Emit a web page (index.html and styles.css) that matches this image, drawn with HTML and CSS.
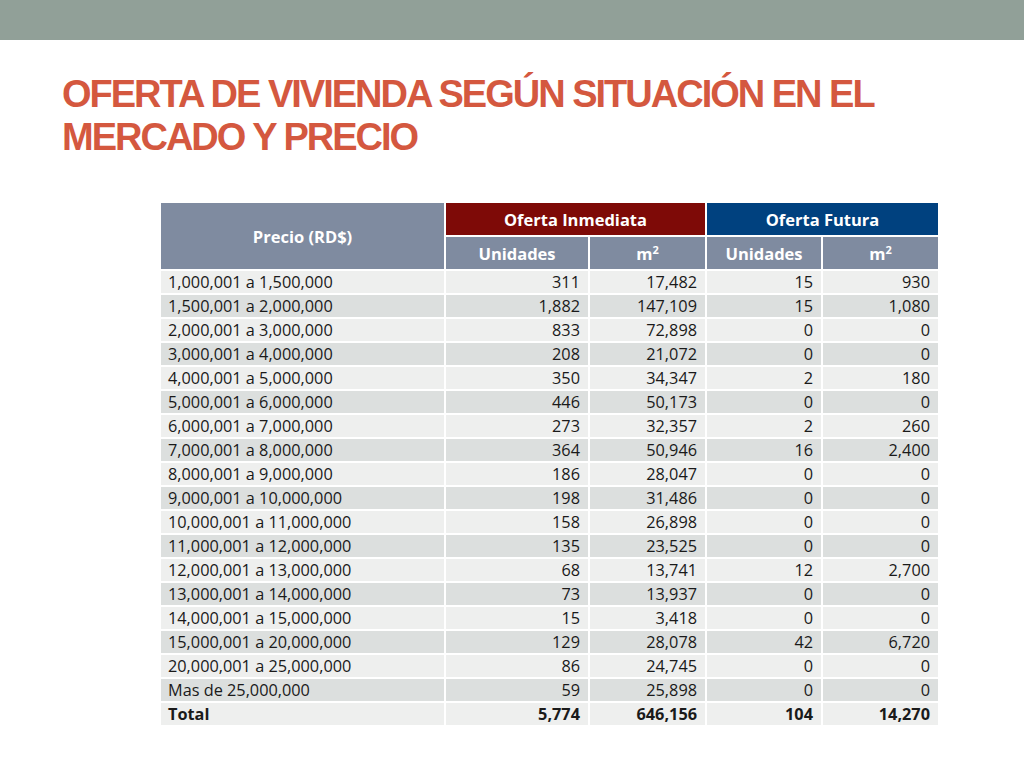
FILE: index.html
```html
<!DOCTYPE html>
<html lang="es">
<head>
<meta charset="utf-8">
<title>Oferta de vivienda</title>
<link rel="stylesheet" href="styles.css">
</head>
<body>
<div class="topbar"></div>
<h1 class="title">OFERTA DE VIVIENDA SEGÚN SITUACIÓN EN EL<br>MERCADO Y PRECIO</h1>
<div class="wrap">
<table class="data">
<colgroup>
<col class="c0"><col class="c1"><col class="c2"><col class="c3"><col class="c4">
</colgroup>
<thead>
<tr>
<th rowspan="2" class="h-precio">Precio (RD$)</th>
<th colspan="2" class="h-inm">Oferta Inmediata</th>
<th colspan="2" class="h-fut">Oferta Futura</th>
</tr>
<tr>
<th class="h-sub">Unidades</th><th class="h-sub">m<sup>2</sup></th>
<th class="h-sub">Unidades</th><th class="h-sub">m<sup>2</sup></th>
</tr>
</thead>
<tbody>
<tr><td>1,000,001 a 1,500,000</td><td>311</td><td>17,482</td><td>15</td><td>930</td></tr>
<tr><td>1,500,001 a 2,000,000</td><td>1,882</td><td>147,109</td><td>15</td><td>1,080</td></tr>
<tr><td>2,000,001 a 3,000,000</td><td>833</td><td>72,898</td><td>0</td><td>0</td></tr>
<tr><td>3,000,001 a 4,000,000</td><td>208</td><td>21,072</td><td>0</td><td>0</td></tr>
<tr><td>4,000,001 a 5,000,000</td><td>350</td><td>34,347</td><td>2</td><td>180</td></tr>
<tr><td>5,000,001 a 6,000,000</td><td>446</td><td>50,173</td><td>0</td><td>0</td></tr>
<tr><td>6,000,001 a 7,000,000</td><td>273</td><td>32,357</td><td>2</td><td>260</td></tr>
<tr><td>7,000,001 a 8,000,000</td><td>364</td><td>50,946</td><td>16</td><td>2,400</td></tr>
<tr><td>8,000,001 a 9,000,000</td><td>186</td><td>28,047</td><td>0</td><td>0</td></tr>
<tr><td>9,000,001 a 10,000,000</td><td>198</td><td>31,486</td><td>0</td><td>0</td></tr>
<tr><td>10,000,001 a 11,000,000</td><td>158</td><td>26,898</td><td>0</td><td>0</td></tr>
<tr><td>11,000,001 a 12,000,000</td><td>135</td><td>23,525</td><td>0</td><td>0</td></tr>
<tr><td>12,000,001 a 13,000,000</td><td>68</td><td>13,741</td><td>12</td><td>2,700</td></tr>
<tr><td>13,000,001 a 14,000,000</td><td>73</td><td>13,937</td><td>0</td><td>0</td></tr>
<tr><td>14,000,001 a 15,000,000</td><td>15</td><td>3,418</td><td>0</td><td>0</td></tr>
<tr><td>15,000,001 a 20,000,000</td><td>129</td><td>28,078</td><td>42</td><td>6,720</td></tr>
<tr><td>20,000,001 a 25,000,000</td><td>86</td><td>24,745</td><td>0</td><td>0</td></tr>
<tr><td>Mas de 25,000,000</td><td>59</td><td>25,898</td><td>0</td><td>0</td></tr>
<tr class="total"><td>Total</td><td>5,774</td><td>646,156</td><td>104</td><td>14,270</td></tr>
</tbody>
</table>
</div>
</body>
</html>
```
FILE: styles.css
```css
html, body {
  margin: 0;
  padding: 0;
  background: #ffffff;
}
body {
  width: 1024px;
  height: 768px;
  overflow: hidden;
  font-family: "Open Sans", "Liberation Sans", sans-serif;
}
.topbar {
  height: 40px;
  background: #91a098;
}
.title {
  margin: 33px 0 0 62px;
  font-family: "Liberation Sans", "Arial", sans-serif;
  font-weight: bold;
  font-size: 38px;
  line-height: 43px;
  color: #d4583f;
  letter-spacing: -2px;
}
.wrap {
  padding: 42px 0 0 159px;
}
.data {
  border-collapse: separate;
  border-spacing: 2px;
  font-size: 16.3px;
  color: #1a1a1a;
}
.c0 { width: 283px; }
.c1 { width: 142px; }
.c2 { width: 115px; }
.c3 { width: 114px; }
.c4 { width: 115px; }
.data th {
  color: #ffffff;
  font-weight: bold;
  font-size: 16.5px;
  padding: 0;
  text-align: center;
}
.h-precio {
  background: #7f8ba0;
}
.h-inm {
  background: #7e0a07;
  height: 32px;
}
.h-fut {
  background: #00417f;
  height: 32px;
}
.h-sub {
  background: #7f8ba0;
  height: 32px;
}
.h-sub sup {
  font-size: 11px;
  vertical-align: 6px;
  line-height: 0;
}
.data td {
  height: 22px;
  padding: 0 8px 0 7px;
  text-align: right;
  line-height: 22px;
}
.data td:first-child {
  text-align: left;
}
.data tbody tr:nth-child(odd) td {
  background: #eeefee;
}
.data tbody tr:nth-child(even) td {
  background: #dcdfde;
}
.data tr.total td {
  font-weight: bold;
  background: #eeefee;
}
```
